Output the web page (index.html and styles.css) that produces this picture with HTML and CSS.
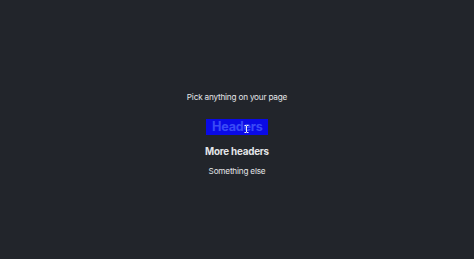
FILE: index.html
```html
<!DOCTYPE html>
<html lang="en">
<head>
    <meta charset="UTF-8">
    <meta name="viewport" content="width=device-width, initial-scale=1.0">
    <title>Picker demo</title>
    <link rel="stylesheet" href="styles.css">
</head>
<body>

<div class="page">
    <p class="intro">Pick anything on your page</p>
    <h1 class="picked">Headers
        <svg class="cursor" width="5" height="8" viewBox="0 0 5 8">
            <path d="M0.5 0.5h1.5l0.5 0.5l0.5 -0.5h1.5M2.5 1v6M0.5 7.5h1.5l0.5 -0.5l0.5 0.5h1.5" fill="none" stroke="#f2f2f4" stroke-width="1"/>
        </svg>
    </h1>
    <h2 class="more">More headers</h2>
    <p class="else">Something else</p>
</div>

</body>
</html>
```

FILE: styles.css
```css
body {
    font-family: Inter, "Noto Sans", sans-serif;
    background-color: #22252b;
    color: #e4e5e8;
    margin: 0;
    height: 259px;
}
.page {
    display: flex;
    flex-direction: column;
    align-items: center;
    padding-top: 91px;
}
.intro {
    font-size: 8.2px;
    letter-spacing: -0.2px;
    margin: 0;
    line-height: 12px;
}
.picked {
    position: relative;
    font-size: 12.6px;
    font-weight: 700;
    letter-spacing: -0.2px;
    color: #3a4af6;
    background: #0a0ae6;
    margin: 16px 0 0;
    line-height: 16px;
    padding: 0 6px;
    width: 50px;
    text-align: center;
}
.cursor {
    position: absolute;
    left: 38px;
    top: 6px;
}
.more {
    font-size: 9.8px;
    font-weight: 700;
    letter-spacing: -0.2px;
    margin: 9px 0 0;
    line-height: 16px;
}
.else {
    font-size: 8.2px;
    letter-spacing: -0.2px;
    margin: 5px 0 0;
    line-height: 12px;
}
```
